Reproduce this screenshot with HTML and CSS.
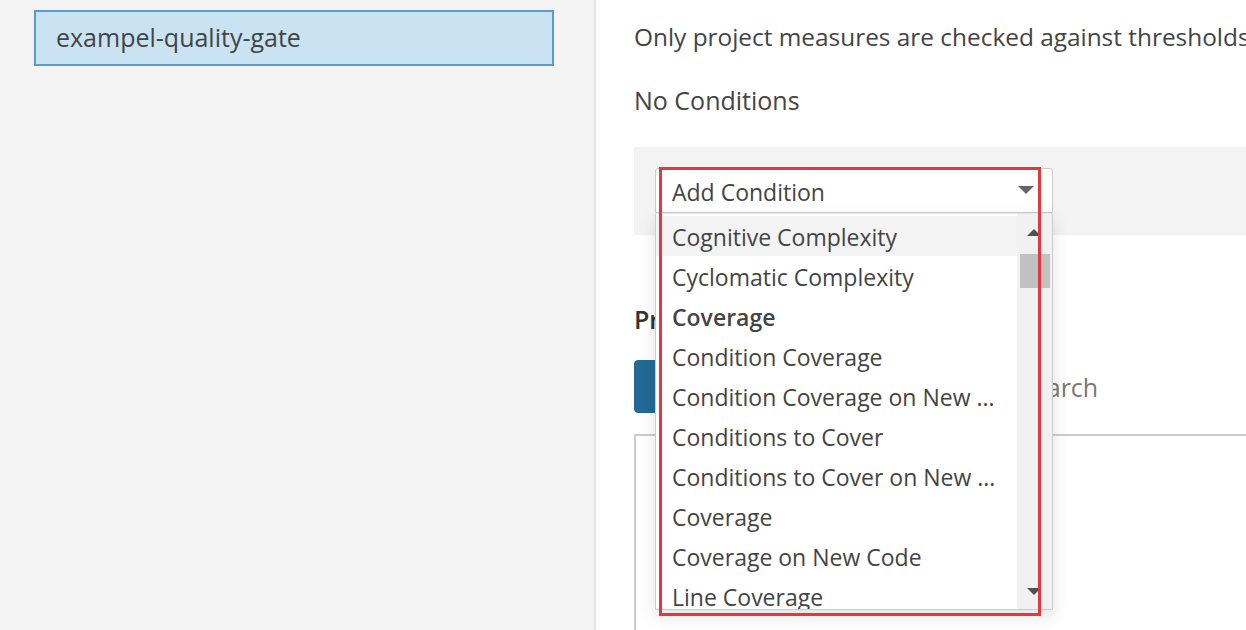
FILE: index.html
```html
<!DOCTYPE html>
<html>
<head>
<meta charset="utf-8">
<link rel="stylesheet" href="styles.css">
</head>
<body>
<div class="page">
  <aside class="sidebar">
    <div class="gate-item">exampel-quality-gate</div>
  </aside>
  <main class="main">
    <p class="note">Only project measures are checked against thresholds. Sub-projects, directories and files are ignored.</p>
    <p class="empty">No Conditions</p>
    <div class="cond-panel">
      <div class="select">
        <div class="select-head">
          <span>Add Condition</span>
          <span class="caret-down"></span>
        </div>
        <div class="menu">
          <div class="menu-list">
            <div class="opt active">Cognitive Complexity</div>
            <div class="opt">Cyclomatic Complexity</div>
            <div class="opt group">Coverage</div>
            <div class="opt">Condition Coverage</div>
            <div class="opt">Condition Coverage on New ...</div>
            <div class="opt">Conditions to Cover</div>
            <div class="opt">Conditions to Cover on New ...</div>
            <div class="opt">Coverage</div>
            <div class="opt">Coverage on New Code</div>
            <div class="opt">Line Coverage</div>
          </div>
          <div class="scrollbar">
            <span class="arrow-up"></span>
            <span class="thumb"></span>
            <span class="arrow-down"></span>
          </div>
        </div>
        <div class="annot"></div>
      </div>
    </div>
    <h2 class="projects-title">Projects</h2>
    <div class="toolbar">
      <div class="btn-group">
        <button class="btn selected">With</button>
        <button class="btn">Without</button>
        <button class="btn">All</button>
      </div>
      <div class="search">Search</div>
    </div>
    <div class="project-box"></div>
  </main>
</div>
</body>
</html>
```
FILE: styles.css
```css
html, body {
  margin: 0;
  padding: 0;
  height: 100%;
  overflow: hidden;
}
body {
  font-family: "Open Sans", "Noto Sans", sans-serif;
  font-size: 25px;
  color: #444;
  background: #fff;
}
.page {
  display: flex;
  height: 630px;
  overflow: hidden;
}
.sidebar {
  width: 596px;
  flex: none;
  background: #f3f3f3;
  border-right: 2px solid #e6e6e6;
  padding: 10px 0 0 34px;
  box-sizing: border-box;
}
.gate-item {
  width: 520px;
  height: 56px;
  box-sizing: border-box;
  background: #cae3f3;
  border: 2px solid #5a9cca;
  padding-left: 20px;
  line-height: 50px;
  color: #444;
}
.main {
  flex: 1;
  padding: 0 0 0 38px;
  min-width: 0;
  white-space: nowrap;
  overflow: hidden;
}
.note {
  margin: 21px 0 0;
  font-size: 24.4px;
  line-height: 32px;
}
.empty {
  margin: 31px 0 0;
  line-height: 32px;
}
.cond-panel {
  margin-top: 31px;
  height: 88px;
  background: #f3f3f3;
  padding: 21px 0 0 21px;
  box-sizing: border-box;
}
.select {
  position: relative;
  width: 398px;
  font-size: 23px;
}
.select-head {
  height: 45px;
  box-sizing: border-box;
  background: #fff;
  border: 1px solid #ccc;
  border-radius: 3px 3px 0 0;
  display: flex;
  align-items: center;
  justify-content: space-between;
  padding: 3px 18px 0 16px;
}
.caret-down {
  width: 0;
  height: 0;
  border-left: 8px solid transparent;
  border-right: 8px solid transparent;
  border-top: 8px solid #666;
  margin-top: -4px;
}
.menu {
  position: absolute;
  top: 45px;
  left: 0;
  width: 398px;
  height: 397px;
  box-sizing: border-box;
  background: #fff;
  border: 1px solid #ccc;
  border-top: 1px solid #e6e6e6;
  box-shadow: 0 6px 16px rgba(0,0,0,0.12);
  display: flex;
  overflow: hidden;
  z-index: 5;
}
.menu-list {
  flex: 1;
  padding-top: 2px;
}
.opt {
  height: 40px;
  line-height: 42px;
  padding-left: 16px;
  color: #444;
}
.opt.active {
  background: #f3f3f3;
}
.opt.group {
  font-weight: 600;
}
.scrollbar {
  width: 33px;
  flex: none;
  background: #f1f1f1;
  display: flex;
  flex-direction: column;
  align-items: flex-end;
  position: relative;
  padding-right: 2px;
}
.arrow-up {
  align-self: center;
  margin-top: 15px;
  width: 0;
  height: 0;
  border-left: 7px solid transparent;
  border-right: 7px solid transparent;
  border-bottom: 7px solid #505050;
}
.thumb {
  margin-top: 18px;
  width: 30px;
  height: 34px;
  background: #c1c1c1;
}
.arrow-down {
  align-self: center;
  margin-top: auto;
  margin-bottom: 14px;
  width: 0;
  height: 0;
  border-left: 7px solid transparent;
  border-right: 7px solid transparent;
  border-top: 7px solid #505050;
}
.annot {
  position: absolute;
  left: 4px;
  top: -1px;
  width: 382px;
  height: 449px;
  box-sizing: border-box;
  border: 3px solid #e0393e;
  z-index: 6;
  pointer-events: none;
}
.projects-title {
  margin: 68px 0 0;
  font-size: 25px;
  font-weight: 600;
  line-height: 32px;
  color: #333;
}
.toolbar {
  margin-top: 25px;
  display: flex;
  align-items: center;
  gap: 20px;
}
.btn-group {
  display: flex;
}
.btn {
  height: 53px;
  font-family: inherit;
  font-size: 22px;
  padding: 0 24px;
  border: 1px solid #236a97;
  background: #fff;
  color: #236a97;
}
.btn.selected {
  background: #236a97;
  color: #fff;
  border-radius: 4px 0 0 4px;
}
.search {
  margin-left: 61px;
  color: #777;
}
.project-box {
  margin-top: 21px;
  height: 300px;
  border-top: 2px solid #ccc;
  border-left: 2px solid #ccc;
}
```
